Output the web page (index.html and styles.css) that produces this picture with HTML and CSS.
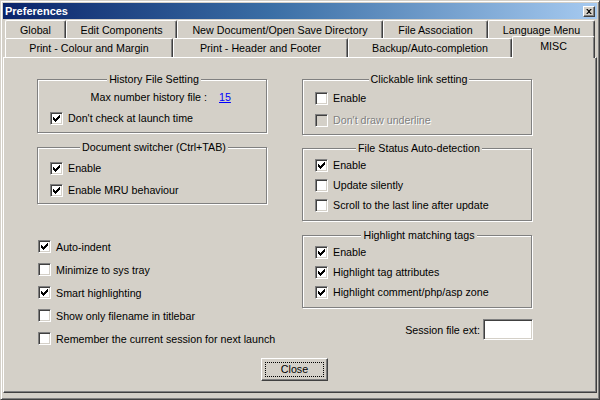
FILE: index.html
```html
<!DOCTYPE html>
<html>
<head>
<meta charset="utf-8">
<title>Preferences</title>
<link rel="stylesheet" href="styles.css">
</head>
<body>
<svg class="defs" width="0" height="0">
  <defs>
    <symbol id="chk" viewBox="1 1 11 11">
      <path d="M3 5h1v3h-1z M4 6h1v3h-1z M5 7h1v3h-1z M6 6h1v3h-1z M7 5h1v3h-1z M8 4h1v3h-1z M9 3h1v3h-1z" fill="#000"/>
    </symbol>
  </defs>
</svg>
<div class="window">
  <div class="titlebar">
    <span class="title">Preferences</span>
    <span class="xbtn"><svg width="8" height="7" viewBox="0 0 8 7"><path d="M0 0h2l2 2 2-2h2l-3 3.5 3 3.5h-2l-2-2-2 2h-2l3-3.5z" fill="#000"/></svg></span>
  </div>
  <div class="tabs">
    <div class="tabrow">
      <div class="tab t-global">Global</div>
      <div class="tab t-edit">Edit Components</div>
      <div class="tab t-newdoc">New Document/Open Save Directory</div>
      <div class="tab t-assoc">File Association</div>
      <div class="tab t-lang">Language Menu</div>
    </div>
    <div class="tabrow row2">
      <div class="tab t-print1">Print - Colour and Margin</div>
      <div class="tab t-print2">Print - Header and Footer</div>
      <div class="tab t-backup">Backup/Auto-completion</div>
      <div class="tab t-misc active">MISC</div>
    </div>
  </div>
  <div class="panel">
    <div class="cols">
      <div class="col">
        <fieldset class="group">
          <legend>History File Setting</legend>
          <div class="row short"><span class="maxlabel">Max number history file :</span><span class="link">15</span></div>
          <div class="row"><span class="cb"><svg><use href="#chk"/></svg></span><span>Don't check at launch time</span></div>
        </fieldset>
        <fieldset class="group doc gap8">
          <legend>Document switcher (Ctrl+TAB)</legend>
          <div class="row"><span class="cb"><svg><use href="#chk"/></svg></span><span>Enable</span></div>
          <div class="row"><span class="cb"><svg><use href="#chk"/></svg></span><span>Enable MRU behaviour</span></div>
        </fieldset>
        <div class="checks">
          <div class="crow"><span class="cb"><svg><use href="#chk"/></svg></span><span>Auto-indent</span></div>
          <div class="crow"><span class="cb"></span><span>Minimize to sys tray</span></div>
          <div class="crow"><span class="cb"><svg><use href="#chk"/></svg></span><span>Smart highlighting</span></div>
          <div class="crow"><span class="cb"></span><span>Show only filename in titlebar</span></div>
          <div class="crow"><span class="cb"></span><span>Remember the current session for next launch</span></div>
        </div>
      </div>
      <div class="col">
        <fieldset class="group">
          <legend>Clickable link setting</legend>
          <div class="row"><span class="cb"></span><span>Enable</span></div>
          <div class="row disabled"><span class="cb"></span><span>Don't draw underline</span></div>
        </fieldset>
        <fieldset class="group three gap7">
          <legend>File Status Auto-detection</legend>
          <div class="row"><span class="cb"><svg><use href="#chk"/></svg></span><span>Enable</span></div>
          <div class="row"><span class="cb"></span><span>Update silently</span></div>
          <div class="row"><span class="cb"></span><span>Scroll to the last line after update</span></div>
        </fieldset>
        <fieldset class="group three gap8">
          <legend>Highlight matching tags</legend>
          <div class="row"><span class="cb"><svg><use href="#chk"/></svg></span><span>Enable</span></div>
          <div class="row"><span class="cb"><svg><use href="#chk"/></svg></span><span>Highlight tag attributes</span></div>
          <div class="row"><span class="cb"><svg><use href="#chk"/></svg></span><span>Highlight comment/php/asp zone</span></div>
        </fieldset>
        <div class="session">
          <span>Session file ext:</span>
          <span class="textbox"></span>
        </div>
      </div>
    </div>
    <div class="footer">
      <div class="button"><span class="focus">Close</span></div>
    </div>
  </div>
</div>
</body>
</html>
```

FILE: styles.css
```css
html, body {
  margin: 0;
  padding: 0;
  background: #d4d0c8;
}

body {
  font-family: "Liberation Sans", Arial, sans-serif;
  font-size: 10.7px;
  color: #000;
}

.defs {
  position: absolute;
  width: 0;
  height: 0;
}

.window {
  width: 600px;
  height: 400px;
  box-sizing: border-box;
  border: 1px solid;
  border-color: #d4d0c8 #404040 #404040 #d4d0c8;
  box-shadow: inset 1px 1px 0 #fff, inset -1px -1px 0 #808080;
  padding: 2px;
  background: #d4d0c8;
  display: flex;
  flex-direction: column;
  overflow: hidden;
}

.titlebar {
  height: 16px;
  flex: none;
  background: linear-gradient(to right, #0a246a 0%, #3a6ea5 45%, #a6caf0 100%);
  display: flex;
  align-items: center;
  justify-content: space-between;
  padding: 0 2px 0 2px;
}

.title {
  color: #fff;
  font-weight: bold;
  font-size: 11px;
  line-height: 14px;
}

.xbtn {
  width: 12px;
  height: 11px;
  box-sizing: border-box;
  background: #d4d0c8;
  border: 1px solid;
  border-color: #fff #404040 #404040 #fff;
  box-shadow: inset -1px -1px 0 #808080;
  display: flex;
  align-items: center;
  justify-content: center;
}

.xbtn svg {
  display: block;
  width: 6px;
  height: 5px;
}

.tabs {
  flex: none;
  margin-top: 1px;
  padding-left: 2px;
  position: relative;
  z-index: 2;
}

.tabrow {
  display: flex;
  height: 18px;
  align-items: flex-end;
}

.row2 {
  height: 19px;
}

.tab {
  box-sizing: border-box;
  height: 18px;
  border-top: 1px solid #fff;
  border-left: 1px solid #fff;
  border-right: 1px solid #404040;
  box-shadow: inset -1px 0 0 #808080;
  border-radius: 2px 2px 0 0;
  background: #d4d0c8;
  text-align: center;
  line-height: 16px;
  padding-top: 1px;
  white-space: nowrap;
}

.row2 .tab {
  height: 19px;
  line-height: 17px;
}

.row2 .tab.active {
  height: 22px;
  margin-top: -2px;
  margin-bottom: -1px;
  line-height: 16px;
  position: relative;
  z-index: 3;
}

.t-global { width: 61px; }
.t-edit { width: 111px; }
.t-newdoc { width: 206px; }
.t-assoc { width: 105px; }
.t-lang { width: 107px; }
.t-print1 { width: 168px; }
.t-print2 { width: 175px; }
.t-backup { width: 164px; }
.t-misc { width: 83px; }

.panel {
  flex: none;
  height: 336px;
  box-sizing: border-box;
  border: 1px solid;
  border-color: #fff #404040 #404040 #fff;
  box-shadow: inset -1px -1px 0 #808080;
  padding: 15px 0 0 33px;
  position: relative;
  z-index: 1;
}

.cols {
  display: grid;
  grid-template-columns: 230px 230px;
  column-gap: 35px;
  align-items: start;
}

.col {
  display: flex;
  flex-direction: column;
}

.group {
  margin: 0;
  min-width: 0;
  border: 1px solid #808080;
  box-shadow: inset 1px 1px 0 #fff, 1px 1px 0 #fff;
  padding: 1px 8px 3px 12px;
}

.group legend {
  margin: 0 auto;
  padding: 0 2px;
  line-height: 13px;
  background: #d4d0c8;
}

.group.doc {
  padding-top: 3px;
  padding-bottom: 2px;
}

.group.three {
  padding-top: 0;
  padding-bottom: 5px;
}

.gap8 { margin-top: 8px; }
.gap7 { margin-top: 7px; }

.row {
  height: 22px;
  display: flex;
  align-items: center;
  gap: 5px;
  white-space: nowrap;
}

.row.short {
  height: 20px;
  gap: 12px;
}

.group.three .row {
  height: 20px;
}

.maxlabel {
  width: 157px;
  text-align: right;
}

.link {
  color: #0000ff;
  text-decoration: underline;
}

.cb {
  width: 13px;
  height: 13px;
  flex: none;
  box-sizing: border-box;
  border: 1px solid;
  border-color: #808080 #fff #fff #808080;
  box-shadow: inset 1px 1px 0 #404040, inset -1px -1px 0 #d4d0c8;
  background: #fff;
}

.cb svg {
  display: block;
  width: 11px;
  height: 11px;
  shape-rendering: crispEdges;
}

.disabled .cb {
  background: #d4d0c8;
}

.disabled span:last-child {
  color: #808080;
  text-shadow: 1px 1px 0 #fff;
}

.checks {
  margin-top: 31px;
  padding-left: 1px;
}

.crow {
  height: 23px;
  display: flex;
  align-items: center;
  gap: 5px;
  white-space: nowrap;
}

.session {
  margin-top: 11px;
  display: flex;
  justify-content: flex-end;
  align-items: center;
  gap: 3px;
  margin-right: -1px;
}

.textbox {
  width: 50px;
  height: 21px;
  box-sizing: border-box;
  border: 1px solid;
  border-color: #808080 #fff #fff #808080;
  box-shadow: inset 1px 1px 0 #404040, inset -1px -1px 0 #d4d0c8;
  background: #fff;
}

.footer {
  margin-top: 8px;
  display: flex;
  justify-content: center;
  padding-right: 44px;
}

.button {
  width: 67px;
  height: 23px;
  box-sizing: border-box;
  border: 1px solid;
  border-color: #fff #404040 #404040 #fff;
  box-shadow: inset -1px -1px 0 #808080;
  padding: 3px;
  display: flex;
}

.focus {
  flex: 1;
  border: 1px dotted #000;
  display: flex;
  align-items: center;
  justify-content: center;
  line-height: 13px;
}
```
